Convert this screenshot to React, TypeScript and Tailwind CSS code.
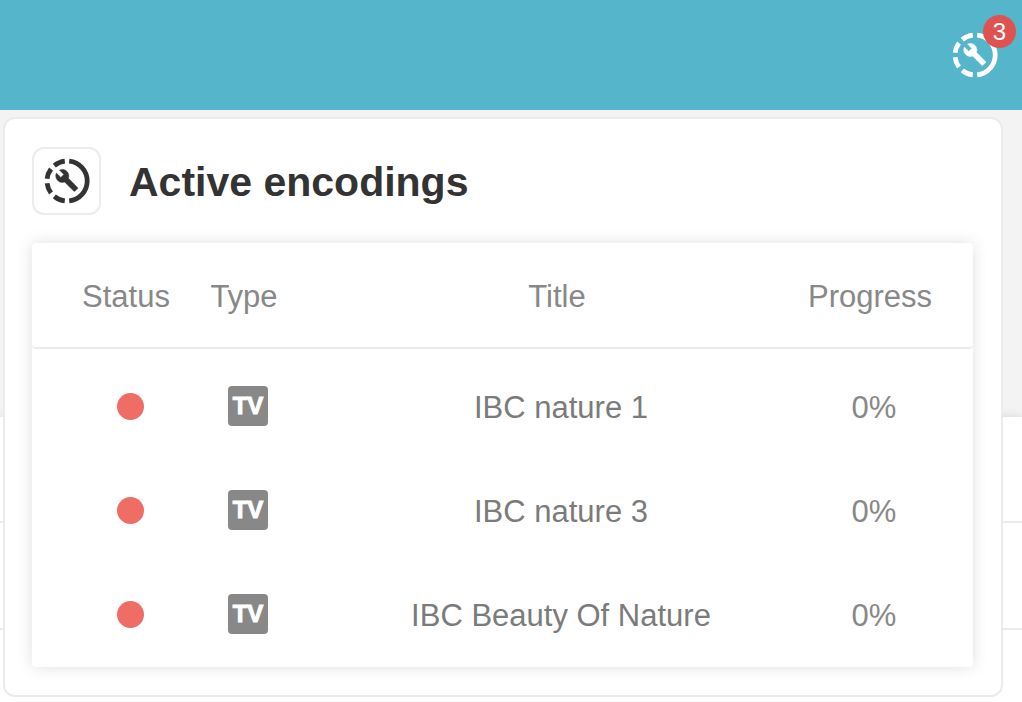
import React from 'react';

type Encoding = { id: number; title: string; progress: number };

const encodings: Encoding[] = [
  { id: 1, title: 'IBC nature 1', progress: 0 },
  { id: 2, title: 'IBC nature 3', progress: 0 },
  { id: 3, title: 'IBC Beauty Of Nature', progress: 0 },
];

function EncodingIcon() {
  return (
    <svg viewBox="0 0 46 46" className="size-[46px]" aria-hidden="true">
      <path
        fill="none"
        stroke="currentColor"
        strokeWidth="4.8"
        d="M25.2 3.1A20 20 0 0 1 25.2 42.9M20.8 3.1A20 20 0 0 0 10.3 7.6M7 11A20 20 0 0 0 3.1 20.8M3.1 25.2A20 20 0 0 0 7 35M10.3 38.4A20 20 0 0 0 20.8 42.9"
      />
      <path
        fill="currentColor"
        stroke="currentColor"
        strokeWidth="0.5"
        transform="translate(10.8 10.4)"
        d="M22.7 19l-9.1-9.1c.9-2.3.4-5-1.5-6.9-2-2-5-2.4-7.4-1.3L9 6 6 9 1.6 4.7C.4 7.1.9 10.1 2.9 12.1c1.9 1.9 4.6 2.4 6.9 1.5l9.1 9.1c.4.4 1 .4 1.4 0l2.3-2.3c.5-.4.5-1.1.1-1.4z"
      />
    </svg>
  );
}

function TopBar() {
  return (
    <header className="flex h-[110px] items-center justify-end bg-[#54b5cb] pr-6">
      <button type="button" aria-label="Active encodings" className="relative text-white">
        <EncodingIcon />
        <span className="absolute -top-[17px] left-[31px] flex size-[33px] items-center justify-center rounded-full bg-[#de524f] text-2xl">
          3
        </span>
      </button>
    </header>
  );
}

function EncodingsTable() {
  return (
    <div className="rounded-sm bg-white shadow-[0_0_16px_rgba(0,0,0,0.13)]">
      <table className="w-full table-fixed border-separate border-spacing-0 text-center text-[31px] leading-10 text-[#888888]">
        <colgroup>
          <col className="w-[153px]" />
          <col className="w-[118px]" />
          <col />
          <col className="w-[170px]" />
        </colgroup>
        <thead>
          <tr className="h-[106px] *:border-b-2 *:border-[#ebebeb] *:pt-1 *:font-normal">
            <th className="rounded-bl-sm pl-[35px]">Status</th>
            <th>Type</th>
            <th className="pl-2">Title</th>
            <th className="rounded-br-sm pr-9">Progress</th>
          </tr>
        </thead>
        <tbody className="before:block before:h-1.5">
          {encodings.map((item) => (
            <tr key={item.id} className="h-[104px]">
              <td className="pb-0.5 pl-11">
                <span role="img" aria-label="Error" className="mx-auto block size-[27px] rounded-full bg-[#ee6d65]" />
              </td>
              <td className="pb-0.5 pl-2">
                <span className="mx-auto flex size-10 items-center justify-center rounded-sm bg-[#888888] text-2xl font-bold text-white [-webkit-text-stroke:1px_white]">
                  TV
                </span>
              </td>
              <td className="pt-0.5 pl-4 text-[#7b7b7b]">{item.title}</td>
              <td className="pt-0.5 pr-9 pl-2">{item.progress}%</td>
            </tr>
          ))}
        </tbody>
      </table>
    </div>
  );
}

function EncodingsPanel() {
  return (
    <section className="absolute top-[117px] right-[19px] left-[3px] rounded-xl border-2 border-[#ebebeb] bg-white pt-7 pr-7 pb-7 pl-[27px]">
      <div className="mb-7 flex items-center gap-7">
        <div className="flex h-[68px] w-[69px] items-center justify-center rounded-xl border-2 border-[#ebebf0] text-[#333333]">
          <EncodingIcon />
        </div>
        <h1 className="pt-0.5 text-[41px] leading-[48px] font-bold text-[#333333]">Active encodings</h1>
      </div>
      <EncodingsTable />
    </section>
  );
}

export default function App() {
  return (
    <div className="relative min-h-screen overflow-hidden bg-[#f3f3f3] font-['Liberation_Sans',Arial,sans-serif]">
      <TopBar />
      {/* list behind the panel */}
      <div className="mt-[307px] bg-white shadow-[0_0_10px_rgba(0,0,0,0.12)]">
        <div className="h-[106px] border-b-2 border-[#ebebeb]" />
        <div className="h-[107px] border-b-2 border-[#ebebeb]" />
        <div className="h-[106px]" />
      </div>
      <EncodingsPanel />
    </div>
  );
}
